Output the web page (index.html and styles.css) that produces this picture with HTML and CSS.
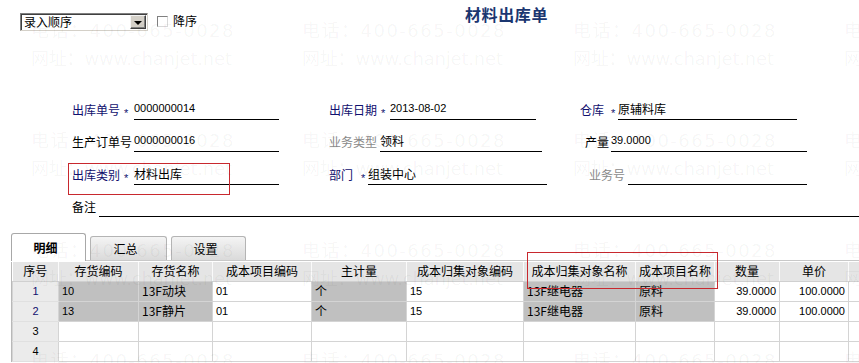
FILE: index.html
```html
<!DOCTYPE html>
<html lang="zh-CN">
<head>
<meta charset="utf-8">
<title>材料出库单</title>
<link rel="stylesheet" href="styles.css">
</head>
<body>
<div class="page">
  <div class="topbar">
    <div class="select">
      <span class="select-text">录入顺序</span>
      <span class="select-btn"><i class="tri"></i></span>
    </div>
    <span class="checkbox"></span>
    <span class="check-label">降序</span>
    <h1 class="title">材料出库单</h1>
  </div>

  <div class="form">
    <div class="row r1">
      <div class="field f1">
        <span class="lbl navy w50">出库单号</span><span class="star s12">*</span><span class="val num w145">0000000014</span>
      </div>
      <div class="field f2">
        <span class="lbl navy w50">出库日期</span><span class="star s11">*</span><span class="val num w146">2013-08-02</span>
      </div>
      <div class="field f3">
        <span class="lbl navy w30">仓库</span><span class="star s8">*</span><span class="val w179">原辅料库</span>
      </div>
    </div>
    <div class="row r2">
      <div class="field f1">
        <span class="lbl w62">生产订单号</span><span class="val num w145">0000000016</span>
      </div>
      <div class="field f2">
        <span class="lbl grey w51">业务类型</span><span class="val w162">领料</span>
      </div>
      <div class="field f3 pl5">
        <span class="lbl w26">产量</span><span class="val num w196">39.0000</span>
      </div>
    </div>
    <div class="row r3">
      <div class="field f1">
        <div class="redbox rb1"></div>
        <span class="lbl navy w50">出库类别</span><span class="star s12">*</span><span class="val w145">材料出库</span>
      </div>
      <div class="field f2">
        <span class="lbl navy w30">部门</span><span class="star s9">*</span><span class="val w179">组装中心</span>
      </div>
      <div class="field f3 pl9">
        <span class="lbl grey w39">业务号</span><span class="val w179"></span>
      </div>
    </div>
    <div class="row r4">
      <div class="field fwide">
        <span class="lbl w27">备注</span><span class="val grow"></span>
      </div>
    </div>
  </div>

  <div class="grid-area">
    <div class="redbox rb2"></div>
    <div class="tabs">
      <div class="tab active">明细</div>
      <div class="tab t2">汇总</div>
      <div class="tab t3">设置</div>
    </div>
    <div class="table-wrap">
      <table class="grid">
        <colgroup>
          <col class="c46"><col class="c80"><col class="c74"><col class="c99"><col class="c95"><col class="c117"><col class="c112"><col class="c79"><col class="c65"><col class="c69"><col class="c40">
        </colgroup>
        <thead>
          <tr>
            <th>序号</th><th>存货编码</th><th>存货名称</th><th>成本项目编码</th><th>主计量</th><th>成本归集对象编码</th><th>成本归集对象名称</th><th>成本项目名称</th><th>数量</th><th>单价</th><th></th>
          </tr>
        </thead>
        <tbody>
          <tr>
            <td class="idx navy">1</td><td class="ro num">10</td><td class="ro">13F动块</td><td class="num">01</td><td class="ro">个</td><td class="num">15</td><td class="ro">13F继电器</td><td class="ro">原料</td><td class="num right">39.0000</td><td class="num right">100.0000</td><td></td>
          </tr>
          <tr>
            <td class="idx navy">2</td><td class="ro num">13</td><td class="ro">13F静片</td><td class="num">01</td><td class="ro">个</td><td class="num">15</td><td class="ro">13F继电器</td><td class="ro">原料</td><td class="num right">39.0000</td><td class="num right">100.0000</td><td></td>
          </tr>
          <tr>
            <td class="idx">3</td><td></td><td></td><td></td><td></td><td></td><td></td><td></td><td></td><td></td><td></td>
          </tr>
          <tr>
            <td class="idx">4</td><td></td><td></td><td></td><td></td><td></td><td></td><td></td><td></td><td></td><td></td>
          </tr>
        </tbody>
      </table>
    </div>
  </div>

  <div class="watermark" aria-hidden="true">
    <div class="wm"><div class="ph">电话：400-665-0028</div><div class="url">网址：www.chanjet.net</div></div>
    <div class="wm"><div class="ph">电话：400-665-0028</div><div class="url">网址：www.chanjet.net</div></div>
    <div class="wm"><div class="ph">电话：400-665-0028</div><div class="url">网址：www.chanjet.net</div></div>
    <div class="wm"><div class="ph">电话：400-665-0028</div><div class="url">网址：www.chanjet.net</div></div>
    <div class="wm"><div class="ph">电话：400-665-0028</div><div class="url">网址：www.chanjet.net</div></div>
    <div class="wm"><div class="ph">电话：400-665-0028</div><div class="url">网址：www.chanjet.net</div></div>
    <div class="wm"><div class="ph">电话：400-665-0028</div><div class="url">网址：www.chanjet.net</div></div>
    <div class="wm"><div class="ph">电话：400-665-0028</div><div class="url">网址：www.chanjet.net</div></div>
    <div class="wm"><div class="ph">电话：400-665-0028</div><div class="url">网址：www.chanjet.net</div></div>
    <div class="wm"><div class="ph">电话：400-665-0028</div><div class="url">网址：www.chanjet.net</div></div>
    <div class="wm"><div class="ph">电话：400-665-0028</div><div class="url">网址：www.chanjet.net</div></div>
    <div class="wm"><div class="ph">电话：400-665-0028</div><div class="url">网址：www.chanjet.net</div></div>
    <div class="wm"><div class="ph">电话：400-665-0028</div><div class="url">网址：www.chanjet.net</div></div>
    <div class="wm"><div class="ph">电话：400-665-0028</div><div class="url">网址：www.chanjet.net</div></div>
    <div class="wm"><div class="ph">电话：400-665-0028</div><div class="url">网址：www.chanjet.net</div></div>
    <div class="wm"><div class="ph">电话：400-665-0028</div><div class="url">网址：www.chanjet.net</div></div>
  </div>
</div>
</body>
</html>
```

FILE: styles.css
```css
* { box-sizing: border-box; }
html, body {
  margin: 0;
  padding: 0;
  background: #fff;
}
body {
  width: 859px;
  height: 363px;
  overflow: hidden;
  font-family: "Liberation Sans", "Noto Sans CJK SC", sans-serif;
  font-size: 12px;
  color: #000;
}
.page {
  position: relative;
  width: 859px;
  height: 363px;
  overflow: hidden;
}

/* top bar */
.topbar {
  height: 100px;
  display: flex;
  align-items: flex-start;
}
.select {
  margin: 13px 0 0 20px;
  width: 128px;
  height: 18px;
  display: flex;
  align-items: center;
  border: 1px solid;
  border-color: #808080 #d4d0c8 #d4d0c8 #808080;
  box-shadow: inset 1px 1px 0 #404040;
  background: #fff;
}
.select-text {
  padding-left: 3px;
  line-height: 16px;
  flex: 1;
  font-family: "Noto Sans CJK SC", sans-serif;
}
.select-btn {
  width: 16px;
  height: 14px;
  margin-right: 1px;
  background: #d4d0c8;
  border: 1px solid;
  border-color: #f4f4f4 #404040 #404040 #f4f4f4;
  box-shadow: inset -1px -1px 0 #808080;
  display: flex;
  align-items: center;
  justify-content: center;
}
.tri {
  display: block;
  width: 0;
  height: 0;
  border-left: 4px solid transparent;
  border-right: 4px solid transparent;
  border-top: 4px solid #000;
  margin-top: 1px;
}
.checkbox {
  margin: 16px 0 0 9px;
  width: 11px;
  height: 11px;
  border: 1px solid;
  border-color: #808080 #d8d8d8 #d8d8d8 #808080;
  background: #fff;
}
.check-label {
  margin: 13px 0 0 5px;
  line-height: 16px;
  font-family: "Noto Sans CJK SC", sans-serif;
}
.title {
  margin: 4px 0 0 268px;
  font-size: 16px;
  font-weight: bold;
  letter-spacing: 0.6px;
  line-height: 20px;
  color: #1b3670;
  font-family: "Noto Sans CJK SC", sans-serif;
}

/* form */
.form {
  display: flex;
  flex-direction: column;
}
.row {
  display: flex;
  height: 20px;
  padding-left: 72px;
}
.r2 { margin-top: 12px; }
.r3 { margin-top: 13px; }
.r4 { margin-top: 12px; }
.field {
  display: flex;
  align-items: flex-start;
  height: 20px;
  position: relative;
}
.f1 { width: 257px; }
.f2 { width: 251px; }
.f3 { flex: 1; }
.fwide { flex: 1; }
.pl5 { padding-left: 5px; }
.pl9 { padding-left: 9px; }
.lbl {
  flex: none;
  line-height: 20px;
  white-space: nowrap;
  font-family: "Noto Sans CJK SC", sans-serif;
}
.navy { color: #10106e; }
.grey { color: #8a8a8a; }
.star {
  flex: none;
  font-size: 11px;
  line-height: 20px;
  padding: 3px 0 0 2px;
  color: #10106e;
  font-family: "Liberation Sans", sans-serif;
}
.s12 { width: 12px; }
.s11 { width: 11px; }
.s9 { width: 9px; }
.s8 { width: 8px; padding-left: 1px; }
.w26 { width: 26px; }
.w27 { width: 27px; }
.w30 { width: 30px; }
.w39 { width: 39px; }
.w50 { width: 50px; }
.w51 { width: 51px; }
.w62 { width: 62px; }
.val {
  flex: none;
  display: block;
  height: 20px;
  line-height: 18px;
  border-bottom: 1px solid #000;
  white-space: nowrap;
  font-family: "Noto Sans CJK SC", sans-serif;
}
.val.num {
  font-family: "Liberation Sans", sans-serif;
  font-size: 11px;
  line-height: 17px;
}
.w145 { width: 145px; }
.w146 { width: 146px; }
.w162 { width: 162px; }
.w179 { width: 179px; }
.w196 { width: 196px; }
.grow { flex: 1; }

.redbox {
  position: absolute;
  border: 1px solid #c8282e;
  pointer-events: none;
  z-index: 3;
}
.rb1 {
  left: -4px;
  top: -2px;
  width: 162px;
  height: 32px;
}

/* tabs + grid */
.grid-area {
  position: relative;
  margin: 16px 0 0 11px;
}
.rb2 {
  left: 516px;
  top: 19px;
  width: 191px;
  height: 37px;
}
.tabs {
  display: flex;
  align-items: flex-end;
  gap: 4px;
  height: 28px;
  border-bottom: 1px solid #c8c8c8;
}
.tab {
  display: flex;
  align-items: center;
  justify-content: center;
  padding-right: 6px;
  height: 24px;
  width: 77px;
  border: 1px solid #b4b4b4;
  border-bottom: none;
  border-radius: 3px 3px 0 0;
  background: linear-gradient(#f4f4f4, #dadada);
  font-family: "Noto Sans CJK SC", sans-serif;
}
.tab.active {
  width: 75px;
  height: 28px;
  background: #fff;
  font-weight: bold;
  border-color: #a8a8a8;
  margin-bottom: -1px;
  padding-bottom: 1px;
}
.t3 { width: 75px; }

.table-wrap {
  margin-top: 1px;
  width: 848px;
  overflow: hidden;
  border-left: 1px solid #b8b8b8;
}
.grid {
  border-collapse: collapse;
  table-layout: fixed;
  width: 876px;
  font-family: "Noto Sans CJK SC", sans-serif;
}
.c46 { width: 46px; }
.c80 { width: 80px; }
.c74 { width: 74px; }
.c99 { width: 99px; }
.c95 { width: 95px; }
.c117 { width: 117px; }
.c112 { width: 112px; }
.c79 { width: 79px; }
.c65 { width: 65px; }
.c69 { width: 69px; }
.c40 { width: 40px; }
.grid th {
  height: 19px;
  padding: 0;
  font-weight: normal;
  font-size: 12px;
  background: #e5e5e5;
  border-right: 1px solid #fafafa;
  border-bottom: 1px solid #d0d0d0;
  text-align: center;
  line-height: 18px;
  white-space: nowrap;
}
.grid td {
  height: 20px;
  padding: 0 0 0 3px;
  border: 1px solid #d4d4d4;
  line-height: 18px;
  white-space: nowrap;
  overflow: hidden;
  background: #fff;
}
.grid td.idx {
  background: #ebebeb;
  text-align: center;
  padding: 0;
  font-family: "Liberation Sans", sans-serif;
  font-size: 11px;
  border-color: #e0e0e0 #d4d4d4;
}
.grid td.ro { background: #c0c0c0; border-color: #d4d4d4; }
.grid td.num { font-family: "Liberation Sans", sans-serif; font-size: 11px; }
.grid td.right { text-align: right; padding: 0 3px 0 0; }
.grid td.navy { color: #10106e; }

/* watermark */
.watermark {
  position: absolute;
  left: 31px;
  top: 20px;
  display: grid;
  grid-template-columns: repeat(4, 271px);
  grid-auto-rows: 110px;
  pointer-events: none;
  z-index: 5;
  color: rgba(0, 0, 0, 0.045);
  font-family: "DejaVu Sans", "Noto Sans CJK SC", sans-serif;
  font-size: 18px;
  white-space: nowrap;
}
.wm .ph {
  letter-spacing: 1.5px;
  line-height: 22px;
}
.wm .url {
  margin-top: 6px;
  letter-spacing: -0.2px;
  line-height: 22px;
}
```
